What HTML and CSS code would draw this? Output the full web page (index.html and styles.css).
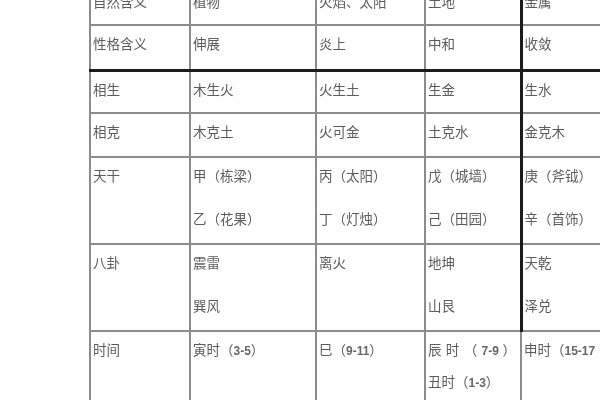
FILE: index.html
```html
<!DOCTYPE html>
<html lang="zh">
<head>
<meta charset="utf-8">
<link rel="stylesheet" href="styles.css">
</head>
<body>
<div class="page">
<table class="wx">
<colgroup>
<col class="c1"><col class="c2"><col class="c3"><col class="c4"><col class="c5">
</colgroup>
<tr class="r0">
<td>自然含义</td><td>植物</td><td>火焰、太阳</td><td>土地</td><td class="k">金属</td>
</tr>
<tr class="r1 heavy">
<td>性格含义</td><td>伸展</td><td>炎上</td><td>中和</td><td class="k">收敛</td>
</tr>
<tr class="r2">
<td>相生</td><td>木生火</td><td>火生土</td><td>生金</td><td class="k">生水</td>
</tr>
<tr class="r3">
<td>相克</td><td>木克土</td><td>火可金</td><td>土克水</td><td class="k">金克木</td>
</tr>
<tr class="r4">
<td>天干</td>
<td><div>甲（栋梁）</div><div class="l2">乙（花果）</div></td>
<td><div>丙（太阳）</div><div class="l2">丁（灯烛）</div></td>
<td><div>戊（城墙）</div><div class="l2">己（田园）</div></td>
<td class="k"><div>庚（斧钺）</div><div class="l2">辛（首饰）</div></td>
</tr>
<tr class="r5">
<td>八卦</td>
<td><div>震雷</div><div class="l2">巽风</div></td>
<td>离火</td>
<td><div>地坤</div><div class="l2">山艮</div></td>
<td class="k"><div>天乾</div><div class="l2">泽兑</div></td>
</tr>
<tr class="r6">
<td>时间</td>
<td>寅时（<span class="num">3-5</span>）</td>
<td>巳（<span class="num">9-11</span>）</td>
<td><div class="just">辰 时 （ <span class="num">7-9</span> ）</div><div class="l3">丑时（<span class="num">1-3</span>）</div></td>
<td>申时（<span class="num">15-17</span></td>
</tr>
</table>
</div>
</body>
</html>
```

FILE: styles.css
```css
html, body {
  margin: 0;
  padding: 0;
  overflow: hidden;
  background: #ffffff;
  width: 600px;
  height: 400px;
}

.page {
  padding-left: 89px;
  margin-top: -18px;
}

.wx {
  border-collapse: collapse;
  table-layout: fixed;
  width: 560px;
  font-family: "Noto Sans CJK SC", "Noto Sans", sans-serif;
  font-size: 13.5px;
  line-height: 20px;
  color: #5c5c5c;
  filter: blur(0.45px);
}

.c1 { width: 100px; }
.c2 { width: 126px; }
.c3 { width: 109px; }
.c4 { width: 96px; }
.c5 { width: 129px; }

.wx td {
  border: 2px solid #8c8c8c;
  vertical-align: top;
  padding: 7px 0 0 2px;
  white-space: nowrap;
  overflow: hidden;
}

.wx td.k {
  border-left: 3px solid #1c1c1c;
}

.r0 td { height: 33px; }
.r1 td { height: 36px; }
.r2 td { height: 33px; }
.r3 td { height: 35px; }
.r4 td { height: 78px; }
.r5 td { height: 78px; }
.r6 td { height: 80px; }

.heavy td {
  border-bottom: 3px solid #1c1c1c;
}

.l2 {
  margin-top: 23px;
}

.l3 {
  margin-top: 10px;
}

.just {
  text-align: justify;
  text-align-last: justify;
  padding-right: 4px;
}

.num {
  font-family: "Liberation Sans", "Noto Sans", sans-serif;
  font-size: 12px;
  font-weight: bold;
  color: #666666;
}
```
